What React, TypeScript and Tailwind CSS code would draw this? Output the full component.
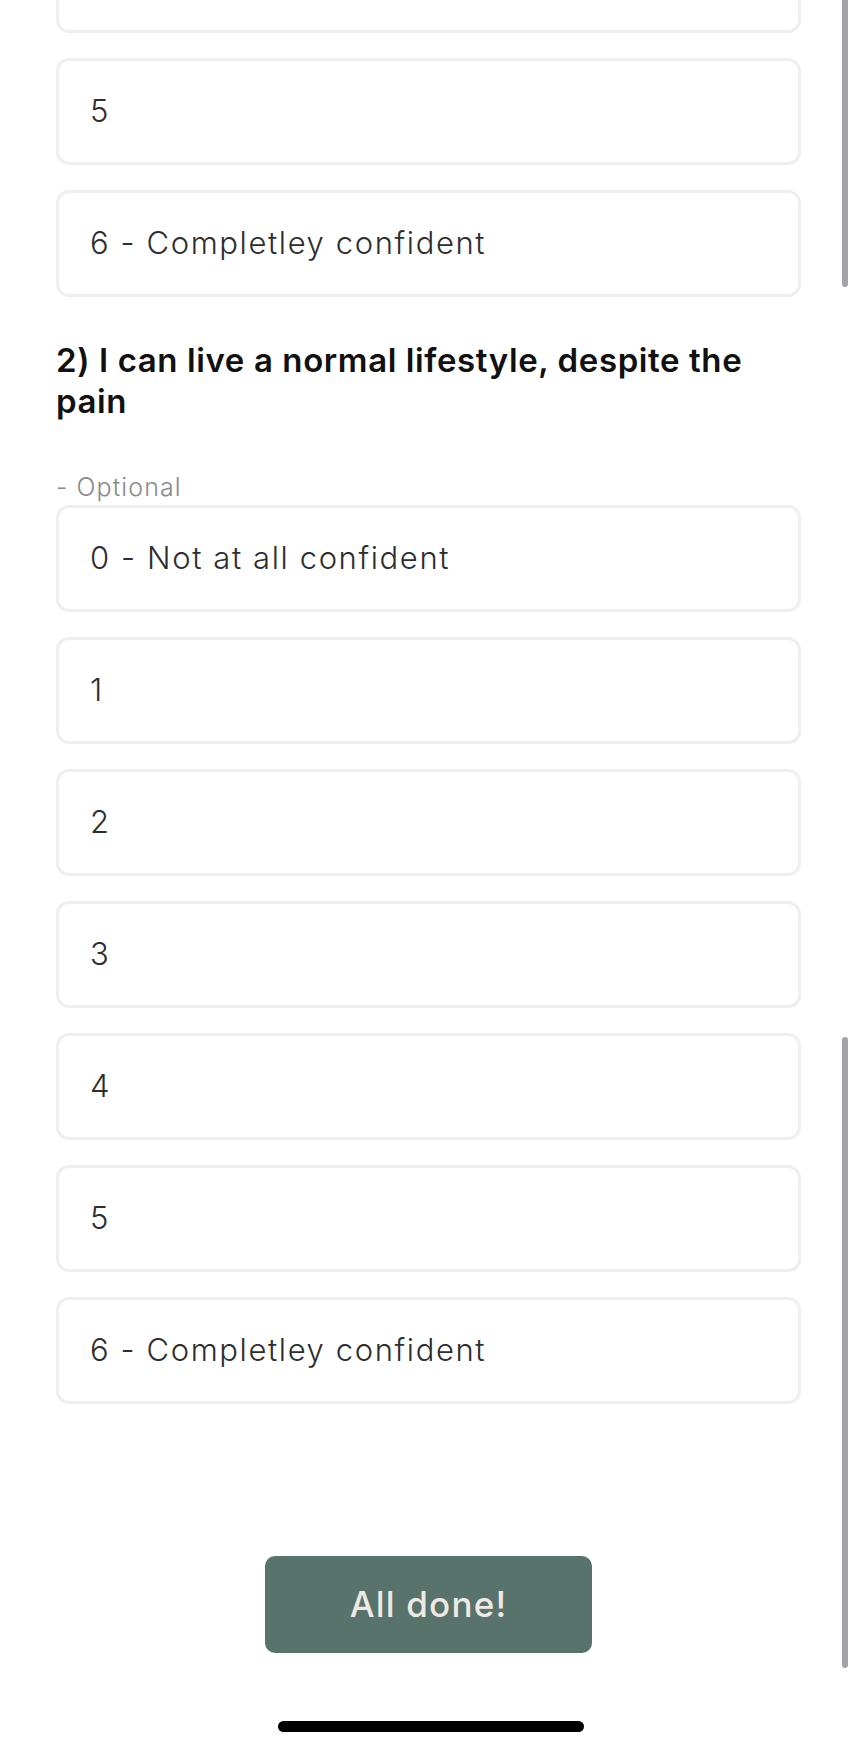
import React from "react";

const FONT = { fontFamily: "Inter, 'Noto Sans', sans-serif" };

const OPTIONS = [
  "0 - Not at all confident",
  "1",
  "2",
  "3",
  "4",
  "5",
  "6 - Completley confident",
];

function Choice({ label }: { label: string }) {
  return (
    <button
      type="button"
      className="flex h-[107px] w-full items-center rounded-[13px] border-[3px] border-[#efeef1] bg-white pl-[31px] text-left text-[31px] font-light tracking-[1.6px] text-[#2e2e2e]"
    >
      {label}
    </button>
  );
}

export default function App() {
  return (
    <div className="relative h-[1750px] w-[857px] overflow-hidden bg-white" style={FONT}>
      {/* scroll indicators */}
      <div className="absolute left-[842px] top-[-10px] h-[297px] w-[6px] rounded-full bg-[#a3a2a7]" />
      <div className="absolute left-[842px] top-[1037px] h-[631px] w-[6px] rounded-full bg-[#a3a2a7]" />

      <div className="-mt-[74px] px-[56px]">
        <div className="flex flex-col gap-[25px]">
          <Choice label="4" />
          <Choice label="5" />
          <Choice label="6 - Completley confident" />
        </div>

        <h2 className="mt-[43px] pr-[40px] text-[33px] font-semibold leading-[41px] tracking-[0.6px] text-[#111]">
          2) I can live a normal lifestyle, despite the pain
        </h2>
        <p className="mt-[51px] text-[25px] font-light leading-[28px] tracking-[1.1px] text-[#8a8a8a]">
          - Optional
        </p>

        <div className="mt-[4px] flex flex-col gap-[25px]">
          {OPTIONS.map((o) => (
            <Choice key={o} label={o} />
          ))}
        </div>

        <div className="mt-[152px] flex justify-center">
          <button
            type="button"
            className="h-[97px] w-[327px] rounded-[10px] bg-[#58736b] text-[35px] font-medium tracking-[1.2px] text-[#efe9e3]"
          >
            All done!
          </button>
        </div>
      </div>

      <div className="absolute left-[278px] top-[1721px] h-[11px] w-[306px] rounded-full bg-black" />
    </div>
  );
}
